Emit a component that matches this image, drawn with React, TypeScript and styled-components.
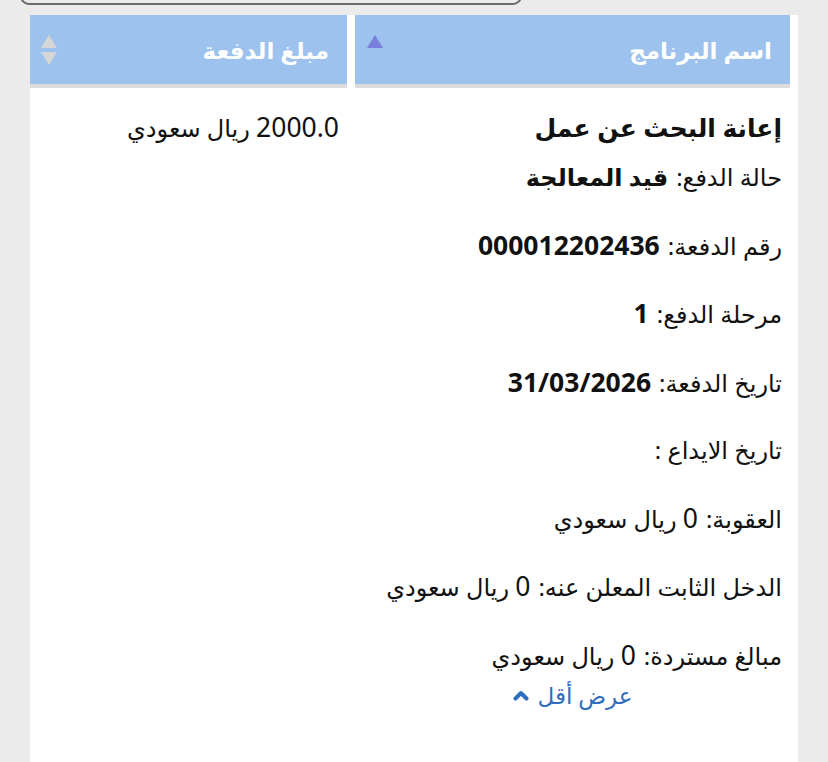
import { FC } from 'react';
import styled, { createGlobalStyle } from 'styled-components';

const GlobalStyle = createGlobalStyle`
    html, body {
        margin: 0;
        padding: 0;
        background: #ebebeb;
    }
    body {
        font-family: "Noto Sans", "DejaVu Sans", sans-serif;
        color: #111;
    }
`;

const Page = styled.div`
    width: 828px;
    height: 762px;
    background: #ebebeb;
    overflow: hidden;
`;

const SearchBox = styled.div`
    width: 498px;
    height: 40px;
    margin: -39px 0 0 20px;
    border: 2px solid #6a6a6a;
    border-radius: 9px;
`;

const Table = styled.div`
    direction: rtl;
    width: 768px;
    margin: 10px 0 0 30px;
    background: #fff;
    display: grid;
    grid-template-columns: 435px 317px;
    column-gap: 8px;
    padding-right: 8px;
    box-sizing: border-box;
`;

const HeaderCell = styled.div<{ $iconPad: number }>`
    height: 69px;
    background: #9dc2ee;
    border-bottom: 4px solid #dcdcdc;
    display: flex;
    align-items: center;
    justify-content: space-between;
    padding: 0 18px 0 ${(p) => p.$iconPad}px;
    color: #fff;
    font-size: 23px;
    font-weight: bold;
`;

const BodyCell = styled.div`
    padding: 22px 8px 90px 8px;
    display: flex;
    flex-direction: column;
`;

const Title = styled.div`
    font-size: 25px;
    font-weight: bold;
    line-height: 34px;
    margin-bottom: 16px;
`;

const Field = styled.div`
    font-size: 24px;
    line-height: 34px;
    margin-bottom: 33.5px;
    &:last-of-type {
        margin-bottom: 4px;
    }
`;

const Value = styled.span<{ $bold?: boolean }>`
    font-weight: ${(p) => (p.$bold ? 'bold' : 'normal')};
    margin-right: 8px;
`;

const Num = styled.span`
    font-size: 26.5px;
`;

const Amount = styled.div`
    font-size: 24px;
    line-height: 34px;
`;

const LessLink = styled.a`
    align-self: center;
    display: flex;
    align-items: center;
    gap: 9px;
    margin-top: 2px;
    color: #2f6dbf;
    font-size: 23px;
    text-decoration: none;
    cursor: pointer;
`;

const SortIcon: FC<{ up: string; down: string }> = ({ up, down }) => (
    <svg width="16" height="30" viewBox="0 0 16 30">
        <polygon points="8,0 16,13 0,13" fill={up} />
        <polygon points="8,30 16,17 0,17" fill={down} />
    </svg>
);

const ChevronUp = () => (
    <svg width="16" height="12" viewBox="0 0 16 12">
        <polyline points="2.5,9.5 8,4 13.5,9.5" fill="none" stroke="#2f6dbf" strokeWidth="4" strokeLinecap="round" strokeLinejoin="round" />
    </svg>
);

// split a value so that latin digits get the slightly larger size
const renderValue = (text: string) =>
    text.split(/(\d[\d/.]*)/).map((part, i) =>
        /^\d/.test(part) ? <Num key={i}>{part}</Num> : part
    );

const fields: { label: string; value: string; bold?: boolean }[] = [
    { label: 'رقم الدفعة:', value: '000012202436', bold: true },
    { label: 'مرحلة الدفع:', value: '1', bold: true },
    { label: 'تاريخ الدفعة:', value: '31/03/2026', bold: true },
    { label: 'تاريخ الايداع :', value: '' },
    { label: 'العقوبة:', value: '0 ريال سعودي' },
    { label: 'الدخل الثابت المعلن عنه:', value: '0 ريال سعودي' },
    { label: 'مبالغ مستردة:', value: '0 ريال سعودي' },
];

export default function App() {
    return (
        <>
            <GlobalStyle />
            <Page>
                <SearchBox />
                <Table>
                    <HeaderCell $iconPad={12}>
                        <span>اسم البرنامج</span>
                        <SortIcon up="#7a7fdc" down="transparent" />
                    </HeaderCell>
                    <HeaderCell $iconPad={11}>
                        <span>مبلغ الدفعة</span>
                        <SortIcon up="#d6d6d6" down="#d6d6d6" />
                    </HeaderCell>
                    <BodyCell>
                        <Title>إعانة البحث عن عمل</Title>
                        <Field>
                            حالة الدفع:
                            <Value $bold>قيد المعالجة</Value>
                        </Field>
                        {fields.map((f) => (
                            <Field key={f.label}>
                                {f.label}
                                {f.value && <Value $bold={f.bold}>{renderValue(f.value)}</Value>}
                            </Field>
                        ))}
                        <LessLink>
                            عرض أقل
                            <ChevronUp />
                        </LessLink>
                    </BodyCell>
                    <BodyCell>
                        <Amount>{renderValue('2000.0 ريال سعودي')}</Amount>
                    </BodyCell>
                </Table>
            </Page>
        </>
    );
}
